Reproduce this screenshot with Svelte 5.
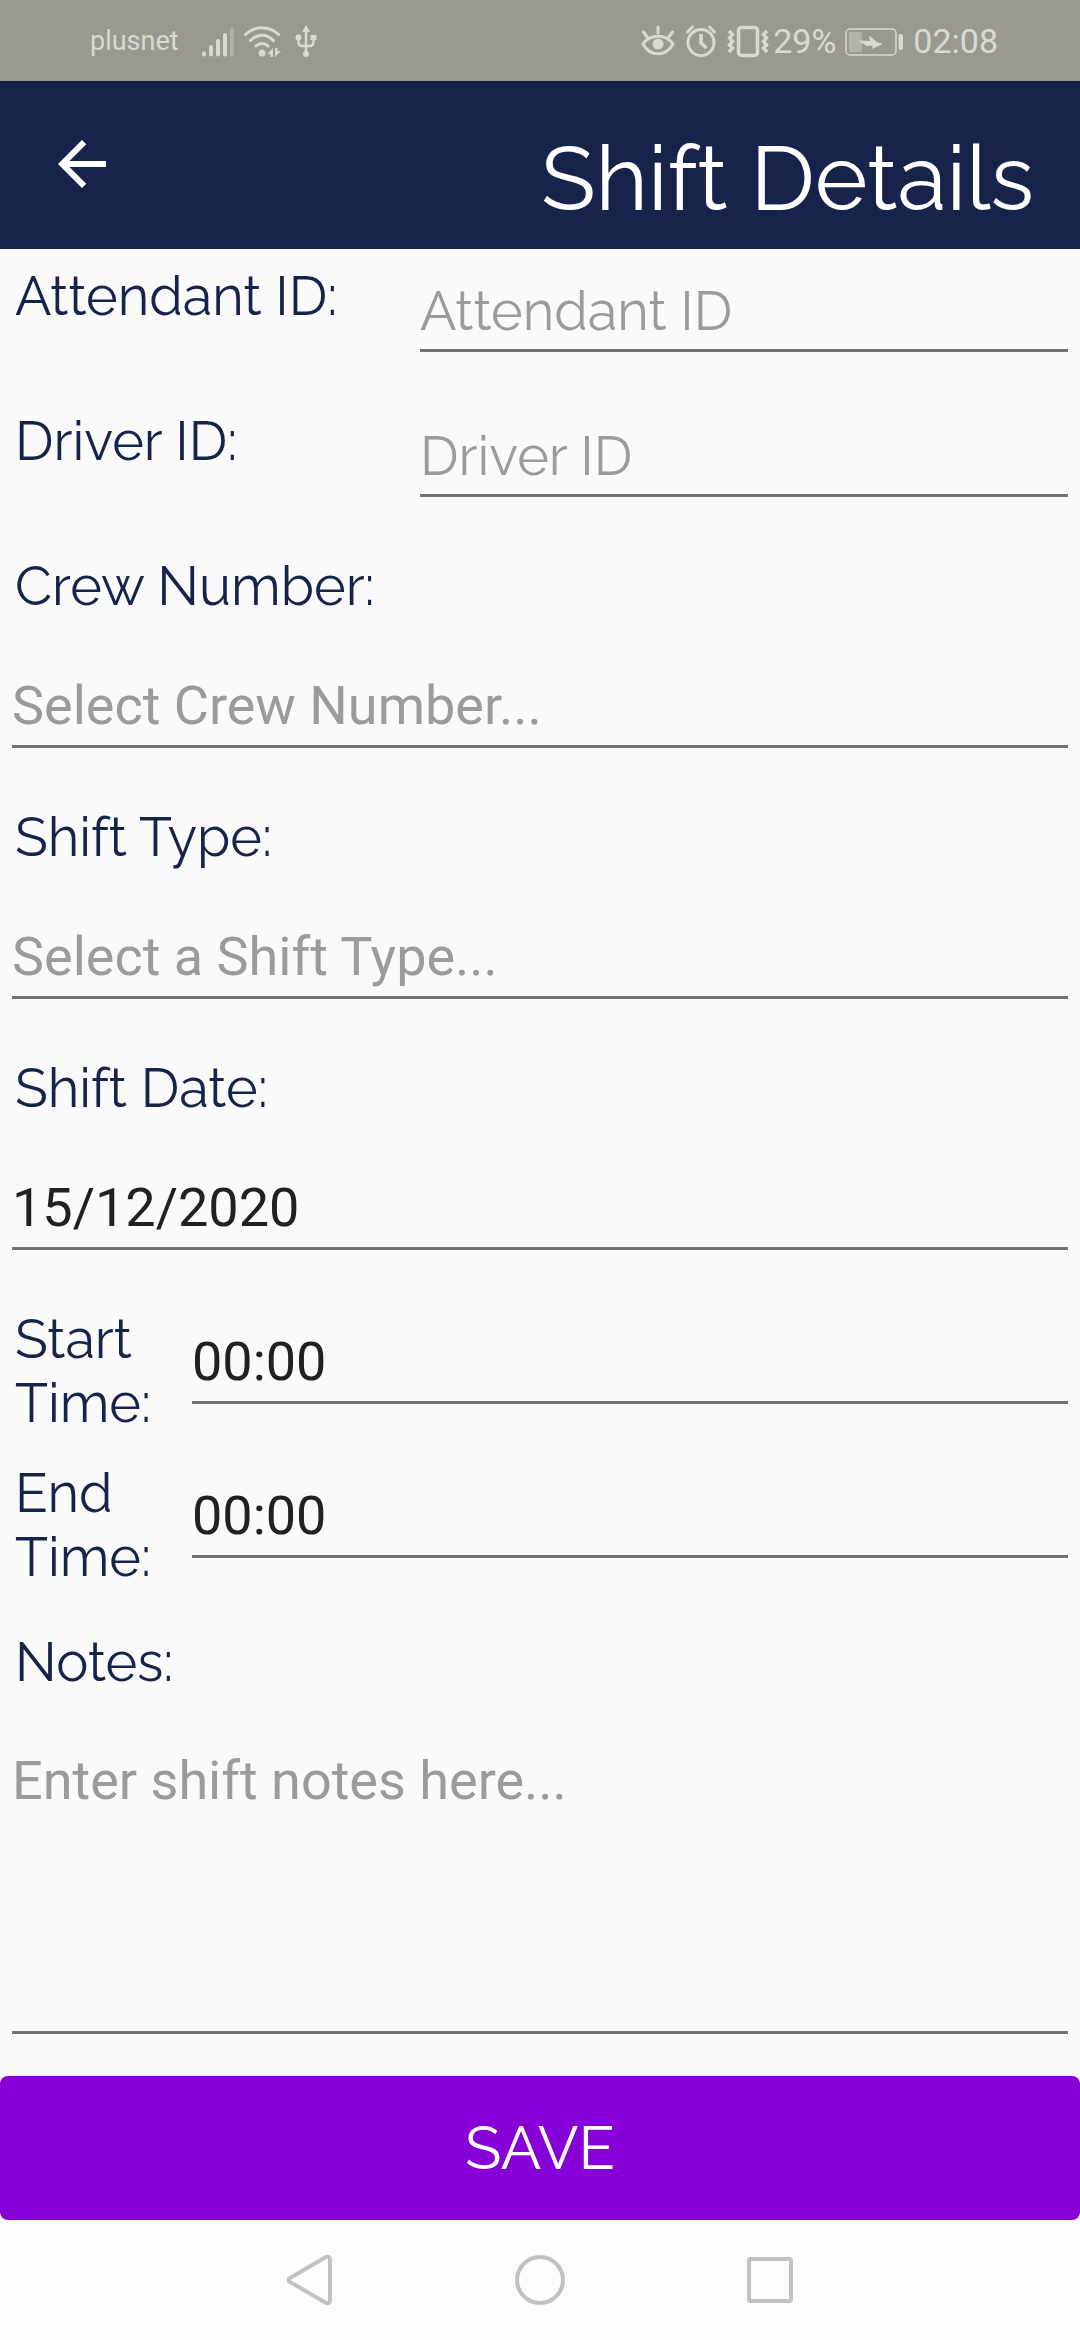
<script>
  let attendant = $state('');
  let driver = $state('');
  let crew = $state('');
  let shiftType = $state('');
  let shiftDate = $state('15/12/2020');
  let startTime = $state('00:00');
  let endTime = $state('00:00');
  let notes = $state('');
</script>

<div class="screen">
  <div class="status">
    <div class="group">
      <span class="carrier">plusnet</span>
      <svg class="signal" width="34" height="34" viewBox="0 0 34 34" aria-hidden="true">
        <g stroke="currentColor" stroke-width="4" stroke-linecap="round">
          <path d="M3 29.500v1M10 23v7.500M17 17v13.500M24 11v19.500" />
          <path d="M31 5v25.500" opacity=".4" />
        </g>
      </svg>
      <svg class="wifi" width="38" height="34" viewBox="0 0 38 34" aria-hidden="true">
        <g fill="none" stroke="currentColor" stroke-width="3" stroke-linecap="round">
          <path d="M2.500 10.500C12 1.500 26 1.500 35.500 10.500" />
          <path d="M7.500 16.500C14.500 9.500 23.500 9.500 30.500 16.500" />
          <path d="M13 22C16.500 18.500 21.500 18.500 25 22" />
        </g>
        <circle cx="19" cy="29" r="3.500" fill="currentColor" />
        <path d="M30 24v9h-2.500v-3H24.500zM32 33v-9h2.500v3H38z" fill="currentColor" />
      </svg>
      <svg class="usb" width="22" height="34" viewBox="0 0 22 34" aria-hidden="true">
        <path d="M11 6v24M3.500 13v5q0 4 4 4h7q4 0 4-4v-5" fill="none" stroke="currentColor" stroke-width="2.500" />
        <path d="M11 1l4 7H7zM15.500 11h6v5h-6z" fill="currentColor" />
        <circle cx="3.500" cy="13.500" r="3" fill="currentColor" />
        <circle cx="11" cy="30" r="3" fill="currentColor" />
      </svg>
    </div>
    <div class="group">
      <svg width="34" height="34" viewBox="0 0 34 34" aria-hidden="true">
        <g fill="none" stroke="currentColor" stroke-width="3" stroke-linecap="round">
          <path d="M2 20C9 9.500 25 9.500 32 20C25 33 9 33 2 20z" />
          <path d="M17 3v6M2.500 8l4 5.500M31.500 8l-4 5.500" />
        </g>
        <circle cx="17" cy="20" r="5.500" fill="currentColor" />
      </svg>
      <svg class="alarm" width="34" height="34" viewBox="0 0 34 34" aria-hidden="true">
        <g fill="none" stroke="currentColor" stroke-width="3">
          <circle cx="17" cy="18.500" r="13" />
          <path d="M17 10v9l5.500 5" stroke-width="3.500" />
          <path d="M3.500 8l5-5M25.500 3l5 5" stroke-linecap="round" />
        </g>
      </svg>
      <svg class="vibrate" width="42" height="34" viewBox="0 0 42 34" aria-hidden="true">
        <g fill="none" stroke="currentColor" stroke-width="3.500">
          <rect x="11.500" y="3.500" width="19" height="28" rx="3" />
          <path d="M2 7l3.500 3.500L2.500 14l3 3.500-3 3.500L5.500 24 2 28M40 7l-3.500 3.500 3 3.500-3 3.500 3 3.500-3 3L40 28" />
        </g>
      </svg>
      <span class="digits percent">29%</span>
      <svg class="battery" width="58" height="34" viewBox="0 0 58 34" aria-hidden="true">
        <rect x="1" y="5" width="50" height="26" rx="4" fill="none" stroke="currentColor" stroke-width="1.500" />
        <rect x="4" y="8" width="13" height="20" rx="1" fill="currentColor" opacity=".4" />
        <path d="M13 16.500l12 .5-1-5.500L32 18l6 2-11 5 .5-3.500L22 22z" fill="currentColor" />
        <rect x="53.500" y="10" width="4.500" height="16" rx="2" fill="currentColor" />
      </svg>
      <span class="digits">02:08</span>
    </div>
  </div>

  <header>
    <button class="back" type="button" aria-label="Back">
      <svg width="72" height="72" viewBox="0 0 24 24" aria-hidden="true">
        <path fill="currentColor" d="M20 11H7.830l5.590-5.590L12 4l-8 8 8 8 1.410-1.410L7.830 13H20z" />
      </svg>
    </button>
    <h1>Shift Details</h1>
  </header>

  <form onsubmit={(event) => event.preventDefault()}>
    <div class="row ids">
      <label for="attendant">Attendant ID:</label>
      <input id="attendant" class="field" type="text" placeholder="Attendant ID" bind:value={attendant} />
    </div>
    <div class="row ids">
      <label for="driver">Driver ID:</label>
      <input id="driver" class="field" type="text" placeholder="Driver ID" bind:value={driver} />
    </div>
    <div class="stack">
      <label for="crew">Crew Number:</label>
      <select id="crew" class="field" class:empty={!crew} bind:value={crew}>
        <option value="">Select Crew Number...</option>
      </select>
    </div>
    <div class="stack">
      <label for="type">Shift Type:</label>
      <select id="type" class="field" class:empty={!shiftType} bind:value={shiftType}>
        <option value="">Select a Shift Type...</option>
      </select>
    </div>
    <div class="stack">
      <label for="date">Shift Date:</label>
      <input id="date" class="field" type="text" bind:value={shiftDate} />
    </div>
    <div class="times">
      <div class="row time">
        <label for="start">Start Time:</label>
        <input id="start" class="field" type="text" bind:value={startTime} />
      </div>
      <div class="row time">
        <label for="end">End Time:</label>
        <input id="end" class="field" type="text" bind:value={endTime} />
      </div>
    </div>
    <div class="stack notes">
      <label for="notes">Notes:</label>
      <textarea id="notes" class="field" placeholder="Enter shift notes here..." bind:value={notes}></textarea>
    </div>
    <button class="save" type="submit">SAVE</button>
  </form>

  <nav aria-label="System">
    <button type="button" aria-label="Back">
      <svg width="56" height="56" viewBox="0 0 56 56" aria-hidden="true">
        <path d="M44 5L8 26q-3 2 0 4L44 51q4 1 4-3V8q0-4-4-3z" />
      </svg>
    </button>
    <button type="button" aria-label="Home">
      <svg width="56" height="56" viewBox="0 0 56 56" aria-hidden="true">
        <circle cx="28" cy="28" r="23" />
      </svg>
    </button>
    <button type="button" aria-label="Recent apps">
      <svg width="56" height="56" viewBox="0 0 56 56" aria-hidden="true">
        <rect x="7" y="7" width="42" height="42" rx="2" />
      </svg>
    </button>
  </nav>
</div>

<style>
  :global(body) {
    background: #fafafa;
  }

  .screen {
    --display: Raleway, Lato, sans-serif;
    display: flex;
    flex-direction: column;
    min-height: 100vh;
    font-family: Roboto, sans-serif;
    color: #212121;
  }

  button {
    border: 0;
    padding: 0;
    background: none;
    color: inherit;
    font: inherit;
  }

  svg {
    display: block;
    flex: none;
  }

  .status {
    display: flex;
    justify-content: space-between;
    height: 81px;
    padding: 0 82px 0 90px;
    background: #99998f;
    color: #d9d9d4;
  }

  .group {
    display: flex;
    align-items: center;
  }

  .carrier {
    font-size: 27px;
  }

  .digits {
    font-size: 34px;
  }

  .signal {
    margin-left: 22px;
  }

  .wifi {
    margin-left: 8px;
  }

  .usb {
    margin-left: 14px;
  }

  .alarm,
  .vibrate,
  .battery {
    margin-left: 9px;
  }

  .percent {
    margin-left: 4px;
  }

  .battery {
    margin-right: 10px;
  }

  header {
    display: flex;
    justify-content: space-between;
    align-items: flex-start;
    height: 168px;
    padding: 0 46px;
    box-sizing: border-box;
    background: #18234c;
    color: #fff;
  }

  .back {
    margin-top: 47px;
  }

  h1 {
    margin: 0;
    padding-top: 43px;
    font: 400 90px/108px var(--display);
  }

  form {
    display: flex;
    flex-direction: column;
    flex: 1;
    gap: 57px;
    padding-top: 15px;
  }

  .row,
  .stack {
    display: grid;
    align-items: start;
    padding: 0 12px;
  }

  .ids {
    grid-template-columns: 17fr 27fr;
  }

  .time {
    grid-template-columns: 15fr 73fr;
  }

  .times {
    display: grid;
    gap: 26px;
  }

  .stack {
    gap: 43px;
  }

  label {
    padding-left: 3px;
    color: #18234c;
    font: 400 54px/64px var(--display);
  }

  .field {
    appearance: none;
    box-sizing: border-box;
    width: 100%;
    min-width: 0;
    height: 87px;
    margin: 0;
    padding: 12px 0 8px;
    border: 0;
    border-bottom: 3px solid #737373;
    border-radius: 0;
    outline: 0;
    background: none;
    color: #212121;
    font: 400 54px/64px Roboto, sans-serif;
  }

  select.field {
    padding: 13px 0 7px;
  }

  .ids .field {
    height: 88px;
    padding: 15px 0 6px;
    font-family: var(--display);
  }

  .time .field {
    height: 97px;
    padding-top: 22px;
  }

  .field::placeholder,
  .empty {
    color: #9b9b9b;
    opacity: 1;
  }

  .notes {
    flex: 1;
    grid-template-rows: auto 1fr;
    margin-top: -16px;
  }

  textarea.field {
    display: block;
    height: 100%;
    min-height: 160px;
    resize: none;
  }

  .save {
    height: 144px;
    margin-top: -15px;
    border-radius: 8px;
    background: #8800d8;
    color: #fff;
    font: 400 60px/72px var(--display);
  }

  nav {
    display: flex;
    justify-content: center;
    align-items: center;
    gap: 174px;
    height: 120px;
    background: #fcfcfc;
  }

  nav svg {
    fill: none;
    stroke: #c1c1c1;
    stroke-width: 4;
  }
</style>
